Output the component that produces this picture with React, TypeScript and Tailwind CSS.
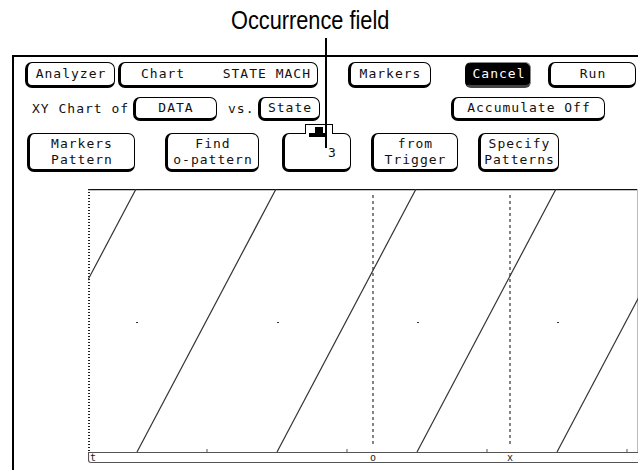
import React from 'react';

const mono = "font-['DejaVu_Sans_Mono','Liberation_Mono',monospace] text-[13px] tracking-[1px] leading-[16px] text-[#111]";
const btn = 'flex items-center justify-center bg-white border border-black border-l-[3px] border-b-[3px] rounded-[7px] ' + mono;

function Chart() {
  // diagonal state ramps, 140px period
  const ramps = [-91, 49, 189, 329, 469];
  return (
    <svg width="550" height="276" viewBox="0 0 550 276" className="block">
      <defs>
        <clipPath id="plot">
          <rect x="0" y="0" width="550" height="263" />
        </clipPath>
      </defs>
      {/* frame */}
      <line x1="0" y1="0.5" x2="550" y2="0.5" stroke="#111" strokeWidth="1.5" />
      <line x1="549.5" y1="0" x2="549.5" y2="263" stroke="#bbb" strokeWidth="1" />
      <line x1="1" y1="0" x2="1" y2="263" stroke="#222" strokeWidth="2" strokeDasharray="1 2" />
      <g clipPath="url(#plot)" stroke="#333" strokeWidth="1.2" fill="none">
        {ramps.map((x) => (
          <line key={x} x1={x} y1="263" x2={x + 139} y2="0" />
        ))}
      </g>
      {/* markers */}
      <line x1="285" y1="6" x2="285" y2="256" stroke="#333" strokeWidth="1.2" strokeDasharray="3 3" />
      <line x1="422" y1="6" x2="422" y2="256" stroke="#333" strokeWidth="1.2" strokeDasharray="3 3" />
      {/* grid dots */}
      {[48, 189, 329, 469].map((x) => (
        <rect key={x} x={x} y="133" width="2" height="1" fill="#333" />
      ))}
      {/* axis */}
      <line x1="0" y1="263.5" x2="550" y2="263.5" stroke="#555" strokeWidth="1.2" />
      {[119, 259, 399, 539].map((x) => (
        <line key={x} x1={x} y1="260" x2={x} y2="263" stroke="#555" strokeWidth="1" />
      ))}
      <path d="M0.5 263 V271 Q0.5 273.5 3 273.5 H550" stroke="#555" strokeWidth="1.2" fill="none" />
      <text x="2" y="272" fontFamily="DejaVu Sans Mono, monospace" fontSize="10" fill="#222">t</text>
      <text x="282" y="272" fontFamily="DejaVu Sans Mono, monospace" fontSize="10" fill="#222">o</text>
      <text x="419" y="272" fontFamily="DejaVu Sans Mono, monospace" fontSize="10" fill="#222">x</text>
    </svg>
  );
}

export default function App() {
  return (
    <div className="relative w-[638px] h-[470px] bg-white overflow-hidden">
      {/* callout title */}
      <div className="h-[55px] pl-[231px] pt-[8px]">
        <div className="origin-left scale-x-[0.87] font-['Liberation_Sans',Arial,sans-serif] text-[25px] leading-[25px] text-black whitespace-nowrap">
          Occurrence field
        </div>
      </div>

      {/* analyzer screen */}
      <div className="ml-[12px] h-[415px] border-l-2 border-t-2 border-black">
        {/* row 1 */}
        <div className="mt-[5px] flex h-[26px]">
          <div className={btn + ' ml-[11px] w-[90px]'}>Analyzer</div>
          <div className={btn + ' ml-[3px] w-[200px] justify-between! pl-[20px] pr-[6px]'}>
            <span>Chart</span>
            <span>STATE MACH</span>
          </div>
          <div className={btn + ' ml-[30px] w-[83px]'}>Markers</div>
          <div className="ml-[34px] w-[66px] flex items-center justify-center bg-black text-white rounded-[6px] border border-[#888] border-l-[3px] border-l-black border-b-[3px] border-b-[#444] font-['DejaVu_Sans_Mono','Liberation_Mono',monospace] text-[13px] tracking-[1px]">
            Cancel
          </div>
          <div className={btn + ' ml-[17px] w-[88px]'}>Run</div>
        </div>

        {/* row 2 */}
        <div className="mt-[9px] flex h-[24px] items-center">
          <span className={mono + ' ml-[18px] w-[101px] whitespace-nowrap'}>XY Chart of</span>
          <div className={btn + ' h-[24px] w-[84px] border-l border-b-2'}>DATA</div>
          <span className={mono + ' ml-[11px] w-[30px]'}>vs.</span>
          <div className={btn + ' h-[24px] w-[62px]'}>State</div>
          <div className={btn + ' h-[24px] ml-[131px] w-[154px]'}>Accumulate Off</div>
        </div>

        {/* row 3 */}
        <div className="mt-[12px] flex h-[39px]">
          <div className={btn + ' ml-[13px] w-[108px] flex-col'}>
            <span>Markers</span>
            <span>Pattern</span>
          </div>
          <div className={btn + ' ml-[30px] w-[94px] flex-col'}>
            <span>Find</span>
            <span>o-pattern</span>
          </div>
          <div className={btn + ' relative ml-[23px] w-[69px] items-start! justify-start! pl-[43px] pt-[11px]'}>
            <span>3</span>
            {/* field tab */}
            <div className="absolute left-[20px] top-[-10px] h-[10px] w-[28px] border border-b-0 border-black bg-white" />
            <div className="absolute left-[30px] top-[-7px] h-[7px] w-[8px] bg-black" />
            <div className="absolute left-[24px] top-[-1px] h-[4px] w-[18px] bg-black" />
          </div>
          <div className={btn + ' ml-[20px] w-[87px] flex-col'}>
            <span>from</span>
            <span>Trigger</span>
          </div>
          <div className={btn + ' ml-[20px] w-[81px] flex-col'}>
            <span>Specify</span>
            <span>Patterns</span>
          </div>
        </div>

        {/* XY chart */}
        <div className="mt-[17px] ml-[74px]">
          <Chart />
        </div>
      </div>

      {/* leader line to the occurrence field */}
      <div className="absolute left-[325px] top-[38px] h-[110px] w-[2px] bg-black" />
    </div>
  );
}
